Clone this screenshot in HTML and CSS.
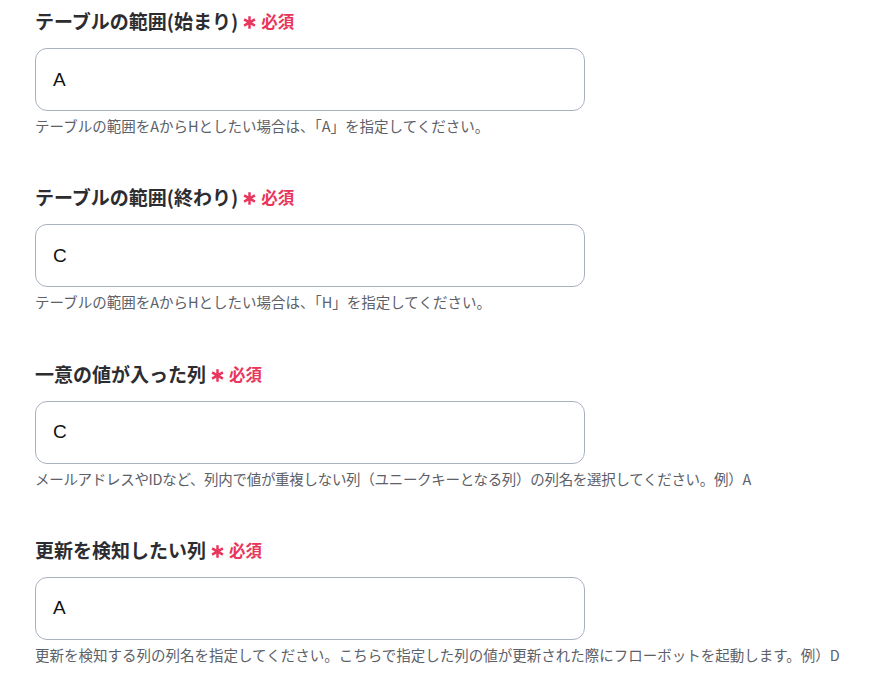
FILE: index.html
```html
<!DOCTYPE html>
<html lang="ja">
<head>
<meta charset="utf-8">
<link rel="stylesheet" href="styles.css">
</head>
<body>
<div class="form">
  <div class="field">
    <div class="label">テーブルの範囲(始まり)<span class="req"><svg class="ast" viewBox="0 0 12 12" aria-hidden="true"><path d="M6 0.3V11.7M1 3.1L11 8.9M1 8.9L11 3.1"/></svg>必須</span></div>
    <div class="input">A</div>
    <div class="help">テーブルの範囲をAからHとしたい場合は、「A」を指定してください。</div>
  </div>
  <div class="field">
    <div class="label">テーブルの範囲(終わり)<span class="req"><svg class="ast" viewBox="0 0 12 12" aria-hidden="true"><path d="M6 0.3V11.7M1 3.1L11 8.9M1 8.9L11 3.1"/></svg>必須</span></div>
    <div class="input">C</div>
    <div class="help">テーブルの範囲をAからHとしたい場合は、「H」を指定してください。</div>
  </div>
  <div class="field">
    <div class="label">一意の値が入った列<span class="req"><svg class="ast" viewBox="0 0 12 12" aria-hidden="true"><path d="M6 0.3V11.7M1 3.1L11 8.9M1 8.9L11 3.1"/></svg>必須</span></div>
    <div class="input">C</div>
    <div class="help help-tight">メールアドレスやIDなど、列内で値が重複しない列（ユニークキーとなる列）の列名を選択してください。例）A</div>
  </div>
  <div class="field">
    <div class="label">更新を検知したい列<span class="req"><svg class="ast" viewBox="0 0 12 12" aria-hidden="true"><path d="M6 0.3V11.7M1 3.1L11 8.9M1 8.9L11 3.1"/></svg>必須</span></div>
    <div class="input">A</div>
    <div class="help">更新を検知する列の列名を指定してください。こちらで指定した列の値が更新された際にフローボットを起動します。例）D</div>
  </div>
</div>
</body>
</html>
```
FILE: styles.css
```css
html, body {
  margin: 0;
  padding: 0;
  background: #ffffff;
}
body {
  font-family: "Noto Sans CJK JP", "Noto Sans", sans-serif;
  color: #2e2e33;
}
.form {
  padding: 7px 0 0 35px;
  display: flex;
  flex-direction: column;
  gap: 47.3px;
}
.field {
  display: flex;
  flex-direction: column;
}
.label {
  font-size: 19px;
  font-weight: 600;
  line-height: 28px;
  height: 28px;
  color: #2d2d31;
  display: flex;
  align-items: center;
}
.req {
  display: inline-flex;
  align-items: center;
  flex-shrink: 0;
  color: #e8365c;
  font-size: 16.5px;
  font-weight: 700;
}
.ast {
  display: block;
  flex: 0 0 13px;
  width: 13px;
  height: 13px;
  margin: 3px 5px 0 5px;
  fill: none;
  stroke: #e8365c;
  stroke-width: 2.3;
}
.input {
  margin-top: 13px;
  width: 550px;
  height: 63px;
  box-sizing: border-box;
  border: 1px solid #a9b1be;
  border-radius: 12px;
  padding-left: 17px;
  display: flex;
  align-items: center;
  font-family: "Liberation Sans", Arial, sans-serif;
  font-size: 19px;
  color: #111;
}
.help {
  margin-top: 5px;
  font-size: 14.5px;
  line-height: 20px;
  color: #5c6068;
}
.help-tight {
  letter-spacing: -0.3px;
}
```
